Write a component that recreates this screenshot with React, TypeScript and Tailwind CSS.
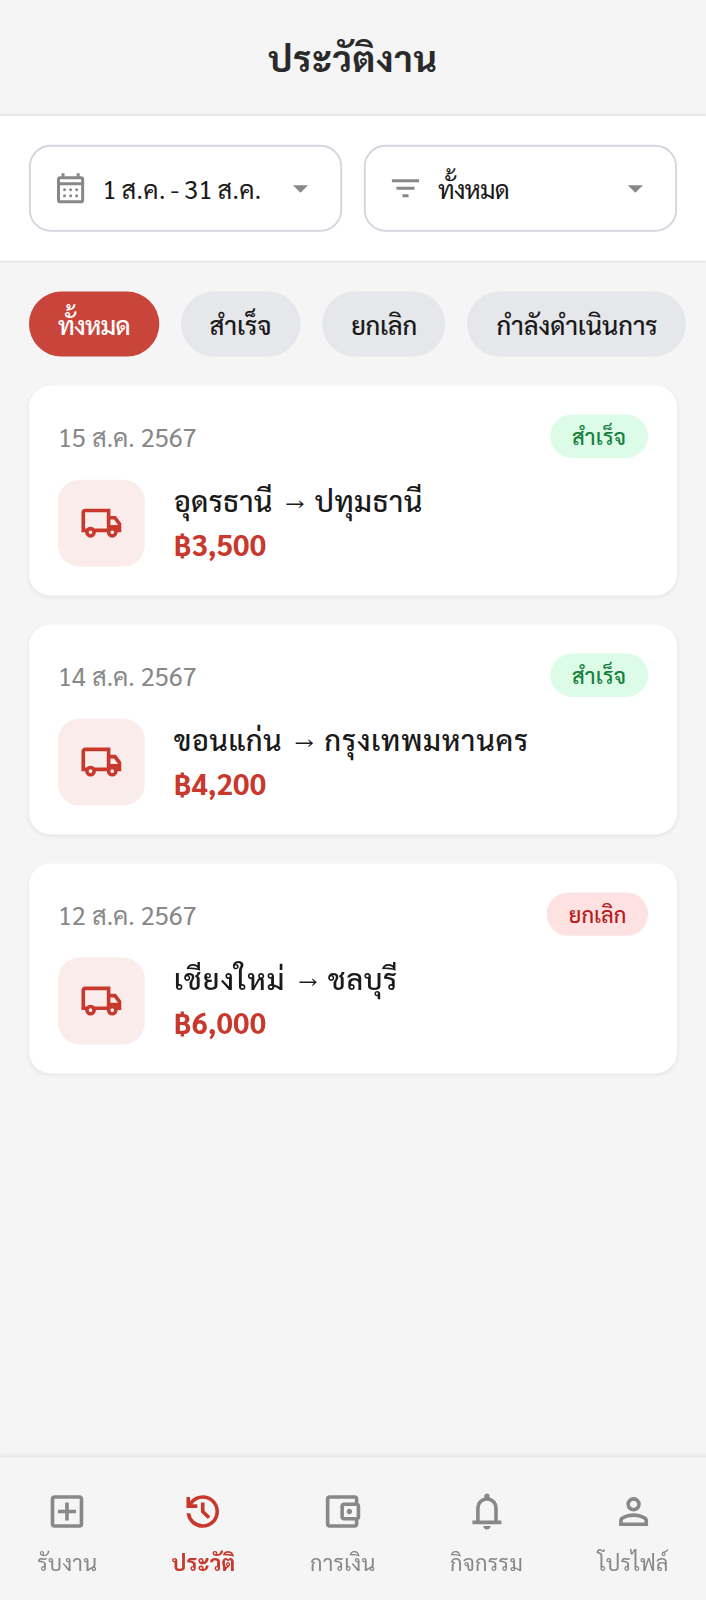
import type { ReactNode } from 'react';

function Icon({ d, className }: { d: string; className: string }) {
  return (
    <svg viewBox="0 -960 960 960" fill="currentColor" className={`shrink-0 ${className}`}>
      <path d={d} />
    </svg>
  );
}

const icons = {
  calendar:
    'M200-80q-33 0-56.5-23.5T120-160v-560q0-33 23.5-56.5T200-800h40v-80h80v80h320v-80h80v80h40q33 0 56.5 23.5T840-720v560q0 33-23.5 56.5T760-80H200Zm0-80h560v-400H200v400Zm0-480h560v-80H200v80Zm0 0v-80 80Zm280 240q-17 0-28.5-11.5T440-440q0-17 11.5-28.5T480-480q17 0 28.5 11.5T520-440q0 17-11.5 28.5T480-400Zm-160 0q-17 0-28.5-11.5T280-440q0-17 11.5-28.5T320-480q17 0 28.5 11.5T360-440q0 17-11.5 28.5T320-400Zm320 0q-17 0-28.5-11.5T600-440q0-17 11.5-28.5T640-480q17 0 28.5 11.5T680-440q0 17-11.5 28.5T640-400ZM480-240q-17 0-28.5-11.5T440-280q0-17 11.5-28.5T480-320q17 0 28.5 11.5T520-280q0 17-11.5 28.5T480-240Zm-160 0q-17 0-28.5-11.5T280-280q0-17 11.5-28.5T320-320q17 0 28.5 11.5T360-280q0 17-11.5 28.5T320-240Zm320 0q-17 0-28.5-11.5T600-280q0-17 11.5-28.5T640-320q17 0 28.5 11.5T680-280q0 17-11.5 28.5T640-240Z',
  filter: 'M400-240v-80h160v80H400ZM240-440v-80h480v80H240ZM120-640v-80h720v80H120Z',
  caret: 'M480-360 280-560h400L480-360Z',
  truck:
    'M240-160q-50 0-85-35t-35-85H40v-440q0-33 23.5-56.5T120-800h560v160h120l120 160v200h-80q0 50-35 85t-85 35q-50 0-85-35t-35-85H360q0 50-35 85t-85 35Zm0-80q17 0 28.5-11.5T280-280q0-17-11.5-28.5T240-320q-17 0-28.5 11.5T200-280q0 17 11.5 28.5T240-240ZM120-360h32q17-18 39-29t49-11q27 0 49 11t39 29h272v-360H120v360Zm600 120q17 0 28.5-11.5T760-280q0-17-11.5-28.5T720-320q-17 0-28.5 11.5T680-280q0 17 11.5 28.5T720-240Zm-40-200h170l-90-120h-80v120Z',
  add: 'M440-280h80v-160h160v-80H520v-160h-80v160H280v80h160v160ZM200-120q-33 0-56.5-23.5T120-200v-560q0-33 23.5-56.5T200-840h560q33 0 56.5 23.5T840-760v560q0 33-23.5 56.5T760-120H200Zm0-80h560v-560H200v560Z',
  history:
    'M480-120q-138 0-240.5-91.5T122-440h82q14 104 92.5 172T480-200q117 0 198.5-81.5T760-480q0-117-81.5-198.5T480-760q-69 0-129 32t-101 88h110v80H120v-240h80v94q51-64 124.5-99T480-840q75 0 140.5 28.5t114 77q48.5 48.5 77 114T840-480q0 75-28.5 140.5t-77 114q-48.5 48.5-114 77T480-120Zm112-192L440-464v-216h80v184l128 128-56 56Z',
  wallet:
    'M200-200v-560 560Zm0 80q-33 0-56.5-23.5T120-200v-560q0-33 23.5-56.5T200-840h560q33 0 56.5 23.5T840-760v100h-80v-100H200v560h560v-100h80v100q0 33-23.5 56.5T760-120H200Zm320-160q-33 0-56.5-23.5T440-360v-240q0-33 23.5-56.5T520-680h280q33 0 56.5 23.5T880-600v240q0 33-23.5 56.5T800-280H520Zm280-80v-240H520v240h280Zm-160-60q25 0 42.5-17.5T700-480q0-25-17.5-42.5T640-540q-25 0-42.5 17.5T580-480q0 25 17.5 42.5T640-420Z',
  bell: 'M160-200v-80h80v-280q0-83 50-147.5T420-792v-28q0-25 17.5-42.5T480-880q25 0 42.5 17.5T540-820v28q80 20 130 84.5T720-560v280h80v80H160Zm320-300Zm0 420q-33 0-56.5-23.5T400-160h160q0 33-23.5 56.5T480-80ZM320-280h320v-280q0-66-47-113t-113-47q-66 0-113 47t-47 113v280Z',
  person:
    'M480-480q-66 0-113-47t-47-113q0-66 47-113t113-47q66 0 113 47t47 113q0 66-47 113t-113 47ZM160-160v-112q0-34 17.5-62.5T224-378q62-31 126-46.5T480-440q66 0 130 15.5T736-378q29 15 46.5 43.5T800-272v112H160Zm80-80h480v-32q0-11-5.5-20T700-306q-54-27-109-40.5T480-360q-56 0-111 13.5T260-306q-9 5-14.5 14t-5.5 20v32Zm240-320q33 0 56.5-23.5T560-640q0-33-23.5-56.5T480-720q-33 0-56.5 23.5T400-640q0 33 23.5 56.5T480-560Z',
};

function FilterBox({ icon, children }: { icon: string; children: ReactNode }) {
  return (
    <button className="flex h-12 flex-1 items-center gap-2 rounded-xl border border-gray-300 bg-white px-3 text-left">
      <Icon d={icon} className="size-5 text-[#888888]" />
      <span className="flex-1 whitespace-nowrap text-sm">{children}</span>
      <Icon d={icons.caret} className="size-5 text-[#888888]" />
    </button>
  );
}

const chips = [
  { label: 'ทั้งหมด', look: 'bg-[#c9453b] text-white tracking-[-0.4px]' },
  { label: 'สำเร็จ', look: 'bg-gray-200' },
  { label: 'ยกเลิก', look: 'bg-gray-200 tracking-[-0.15px]' },
  { label: 'กำลังดำเนินการ', look: 'bg-gray-200 tracking-[-0.03px]' },
];

const jobs = [
  {
    date: '15 ส.ค. 2567',
    from: { name: 'อุดรธานี', spacing: 'tracking-[0.1px]' },
    to: { name: 'ปทุมธานี', spacing: 'tracking-[0.24px]' },
    price: '฿3,500',
    status: 'สำเร็จ',
    done: true,
  },
  {
    date: '14 ส.ค. 2567',
    from: { name: 'ขอนแก่น', spacing: 'tracking-[0.2px]' },
    to: { name: 'กรุงเทพมหานคร', spacing: 'tracking-[0.46px]' },
    price: '฿4,200',
    status: 'สำเร็จ',
    done: true,
  },
  {
    date: '12 ส.ค. 2567',
    from: { name: 'เชียงใหม่', spacing: 'tracking-[0.52px]' },
    to: { name: 'ชลบุรี', spacing: 'tracking-[0.28px]' },
    price: '฿6,000',
    status: 'ยกเลิก',
    done: false,
  },
];

const tabs = [
  { label: 'รับงาน', icon: icons.add },
  { label: 'ประวัติ', icon: icons.history, active: true },
  { label: 'การเงิน', icon: icons.wallet },
  { label: 'กิจกรรม', icon: icons.bell },
  { label: 'โปรไฟล์', icon: icons.person },
];

export default function App() {
  return (
    <div className="h-[1600px] w-[706px] overflow-hidden bg-[#f5f5f5]">
      {/* A 390×884 phone screen, enlarged to fill the frame */}
      <div className="flex h-[884px] w-[390px] origin-top-left scale-[1.8102] flex-col bg-[#f5f5f5] font-['Sarabun','Noto_Sans_Thai_Looped',sans-serif] text-[#1a1a1a]">
        <header className="flex h-16 shrink-0 items-center justify-center border-b border-gray-200">
          <h1 className="text-xl font-bold tracking-[0.4px] text-[#2a2a2a]">ประวัติงาน</h1>
        </header>
        <div className="flex shrink-0 gap-3 border-b border-gray-200 bg-white p-4">
          <FilterBox icon={icons.calendar}>
            <span className="-ml-[0.4px] tracking-[0.2px] [word-spacing:-1px]">1 ส.ค. - 31 ส.ค.</span>
          </FilterBox>
          <FilterBox icon={icons.filter}>
            <span className="tracking-[-0.45px]">ทั้งหมด</span>
          </FilterBox>
        </div>
        <main className="flex-1">
          <div className="flex gap-3 px-4 pt-4">
            {chips.map((c) => (
              <button
                key={c.label}
                className={`shrink-0 whitespace-nowrap rounded-full px-4 py-2 text-sm font-medium ${c.look}`}
              >
                {c.label}
              </button>
            ))}
          </div>
          <div className="flex flex-col gap-4 p-4">
            {jobs.map((j) => (
              <article key={j.date} className="rounded-xl bg-white p-4 shadow-[0_1px_2px_rgba(0,0,0,0.05)]">
                <div className="flex items-center justify-between">
                  <span className="text-sm text-[#888888]">{j.date}</span>
                  <span
                    className={`rounded-full px-3 py-1 text-xs font-medium ${j.done ? 'bg-[#dcfce7] tracking-[0.15px] text-[#15803d]' : 'bg-[#fee2e2] text-[#b91c1c]'}`}
                  >
                    {j.status}
                  </span>
                </div>
                <div className="mt-3 flex items-center gap-4">
                  <div className="flex size-12 items-center justify-center rounded-xl bg-[#faecea] text-[#c8382c]">
                    <Icon d={icons.truck} className="size-6" />
                  </div>
                  <div>
                    <p className="whitespace-nowrap text-base font-medium">
                      <span className={`mr-[1.3px] ${j.from.spacing}`}>{j.from.name}</span> →{' '}
                      <span className={j.to.spacing}>{j.to.name}</span>
                    </p>
                    <p className="text-base font-bold tracking-[0.1px] text-[#c8382c]">{j.price}</p>
                  </div>
                </div>
              </article>
            ))}
          </div>
        </main>
        <nav className="flex h-20 shrink-0 justify-around border-t border-gray-200 pt-[18px] shadow-[0_-1px_3px_rgba(0,0,0,0.05)]">
          {tabs.map((t) => (
            <div
              key={t.label}
              className={`flex flex-col items-center gap-2 tracking-[0.15px] ${t.active ? 'font-bold text-[#c8382c]' : 'text-[#888888]'}`}
            >
              <Icon d={t.icon} className="size-6" />
              <span className="text-xs">{t.label}</span>
            </div>
          ))}
        </nav>
      </div>
    </div>
  );
}
